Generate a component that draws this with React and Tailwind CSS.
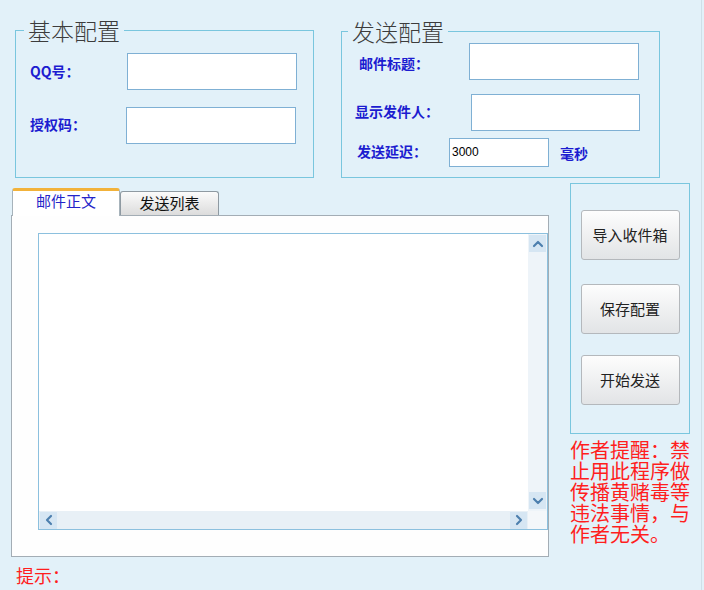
import React from 'react';
import { ChevronUp, ChevronDown, ChevronLeft, ChevronRight } from 'lucide-react';

const cjk = { fontFamily: "'Noto Sans CJK SC', 'Noto Sans', sans-serif" };

const GroupTitle = ({ children, left }) => (
  <div
    className={`w-fit -mt-[14px] -mb-[12px] ${left} px-[4px] bg-[#e2f1f9] text-[23px] leading-[26px] text-[#3c3c3c] font-light`}
  >
    {children}
  </div>
);

const Label = ({ children, className }) => (
  <span className={`text-[14px] leading-[18px] text-[#1c1cd0] font-semibold ${className}`}>{children}</span>
);

const Input = ({ className, value }) => (
  <div className={`bg-white border border-[#7fb0d4] ${className}`}>
    {value && (
      <span className="block pl-[2px] pt-[6px] text-[12px] leading-[14px] text-black" style={{ fontFamily: "'Liberation Sans', sans-serif" }}>
        {value}
      </span>
    )}
  </div>
);

const SideButton = ({ children, className }) => (
  <button
    className={`w-[99px] h-[50px] rounded-[3px] border border-[#b4b8bc] bg-gradient-to-b from-[#fdfdfd] to-[#e2e4e6] text-[15px] text-[#222] ${className}`}
  >
    {children}
  </button>
);

const ArrowBox = ({ children }) => (
  <div className="w-[17px] h-[17px] flex items-center justify-center bg-[#d6e6f3]">{children}</div>
);

const App = () => {
  return (
    <div className="w-[704px] h-[590px] bg-[#e2f1f9] overflow-hidden" style={cjk}>
      <div className="w-[702px] h-[590px] border-r border-[#cfdfe8]">
        {/* top groups */}
        <div className="flex items-start">
          {/* 基本配置 */}
          <div className="ml-[15px] mt-[30px] w-[299px] h-[148px] border border-[#79c6de]">
            <GroupTitle left="ml-[8px]">基本配置</GroupTitle>
            <div className="flex items-center mt-[22px] pl-[14px]">
              <Label className="w-[97px] -mt-[2px]">QQ号：</Label>
              <Input className="w-[170px] h-[37px]" />
            </div>
            <div className="flex items-center mt-[17px] pl-[14px]">
              <Label className="w-[96px] -mt-[4px]">授权码：</Label>
              <Input className="w-[170px] h-[37px]" />
            </div>
          </div>

          {/* 发送配置 */}
          <div className="ml-[27px] mt-[31px] w-[319px] h-[147px] border border-[#79c6de]">
            <GroupTitle left="ml-[6px]">发送配置</GroupTitle>
            <div className="flex items-center mt-[11px] pl-[17px]">
              <Label className="w-[110px] pt-[3px]">邮件标题：</Label>
              <Input className="w-[170px] h-[37px]" />
            </div>
            <div className="flex items-center mt-[14px] pl-[13px]">
              <Label className="w-[116px] -mt-[4px]">显示发件人：</Label>
              <Input className="w-[169px] h-[37px]" />
            </div>
            <div className="flex items-center mt-[7px] pl-[15px]">
              <Label className="w-[92px] -mt-[3px]">发送延迟：</Label>
              <Input className="w-[100px] h-[29px]" value="3000" />
              <Label className="ml-[11px]">毫秒</Label>
            </div>
          </div>
        </div>

        {/* middle */}
        <div className="flex items-start mt-[5px]">
          {/* tab control */}
          <div className="ml-[11px] mt-[5px] w-[538px]">
            <div className="flex items-end h-[27px] pl-[1px]">
              <div className="w-[108px] h-[28px] -mb-[1px] relative bg-white border-x border-[#a7b3bb] border-t-[3px] border-t-[#f2b23a] rounded-t-[3px] flex justify-center">
                <span className="text-[15px] leading-[20px] text-[#2424c8]">邮件正文</span>
              </div>
              <div className="w-[99px] h-[24px] bg-gradient-to-b from-[#fbfbfb] to-[#dcdcdc] border border-b-0 border-[#8f9aa2] rounded-t-[3px] flex justify-center">
                <span className="text-[15px] leading-[22px] text-[#111]">发送列表</span>
              </div>
            </div>
            <div className="h-[342px] bg-[#fefefe] border border-[#a3adb5]">
              <div className="ml-[26px] mt-[17px] w-[510px] h-[297px] bg-white border border-[#8cc0de] flex flex-col">
                <div className="flex-1 flex">
                  <div className="flex-1" />
                  <div className="w-[19px] bg-[#eef4f9] flex flex-col items-center justify-between pt-[1px] pb-[2px]">
                    <ArrowBox>
                      <ChevronUp size={16} strokeWidth={3.2} color="#4d7fae" />
                    </ArrowBox>
                    <ArrowBox>
                      <ChevronDown size={16} strokeWidth={3.2} color="#4d7fae" />
                    </ArrowBox>
                  </div>
                </div>
                <div className="h-[18px] flex">
                  <div className="flex-1 bg-[#e8f0f6] flex items-center justify-between px-[1px]">
                    <ArrowBox>
                      <ChevronLeft size={16} strokeWidth={3.2} color="#4d7fae" />
                    </ArrowBox>
                    <ArrowBox>
                      <ChevronRight size={16} strokeWidth={3.2} color="#4d7fae" />
                    </ArrowBox>
                  </div>
                  <div className="w-[19px] bg-[#f4f7fa]" />
                </div>
              </div>
            </div>
          </div>

          {/* right column */}
          <div className="ml-[21px] flex flex-col">
            <div className="w-[120px] h-[251px] border border-[#79c6de] flex flex-col items-center pt-[26px]">
              <SideButton>导入收件箱</SideButton>
              <SideButton className="mt-[24px]">保存配置</SideButton>
              <SideButton className="mt-[21px]">开始发送</SideButton>
            </div>
            <p className="mt-[5px] w-[122px] text-[20px] leading-[21px] text-[#ff1e1e]">
              作者提醒：禁止用此程序做传播黄赌毒等违法事情，与作者无关。
            </p>
          </div>
        </div>

        {/* tip */}
        <p className="ml-[16px] mt-[6px] text-[18px] leading-[24px] text-[#ff1e1e]">提示：</p>
      </div>
    </div>
  );
};

export default App;
